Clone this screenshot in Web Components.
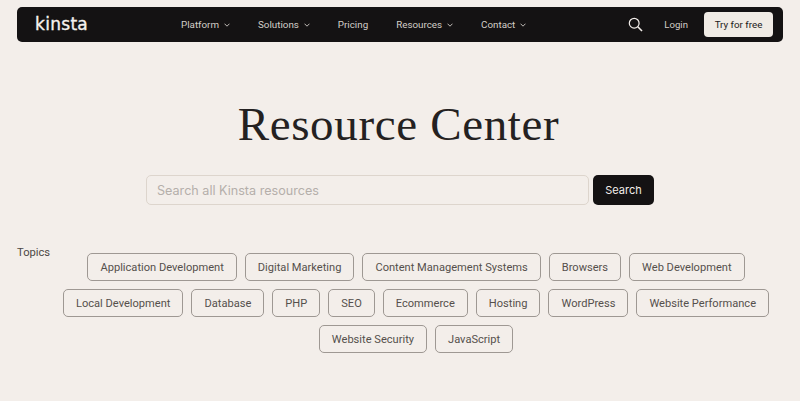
<!DOCTYPE html>
<html lang="en">
<head>
<meta charset="utf-8">
<title>Resource Center</title>
<style>
  html, body { margin: 0; height: 401px; overflow: hidden; }
  body { background: #f3eeea; font-family: Roboto, Inter, sans-serif; }
</style>
</head>
<body>
<kinsta-page>
  <kinsta-nav>
    <nav-item menu>Platform</nav-item>
    <nav-item menu>Solutions</nav-item>
    <nav-item>Pricing</nav-item>
    <nav-item menu>Resources</nav-item>
    <nav-item menu>Contact</nav-item>
  </kinsta-nav>
  <resource-hero heading="Resource Center"></resource-hero>
  <topic-list label="Topics">
    <topic-chip>Application Development</topic-chip>
    <topic-chip>Digital Marketing</topic-chip>
    <topic-chip>Content Management Systems</topic-chip>
    <topic-chip>Browsers</topic-chip>
    <topic-chip>Web Development</topic-chip>
    <topic-chip>Local Development</topic-chip>
    <topic-chip>Database</topic-chip>
    <topic-chip>PHP</topic-chip>
    <topic-chip>SEO</topic-chip>
    <topic-chip>Ecommerce</topic-chip>
    <topic-chip>Hosting</topic-chip>
    <topic-chip>WordPress</topic-chip>
    <topic-chip>Website Performance</topic-chip>
    <topic-chip>Website Security</topic-chip>
    <topic-chip>JavaScript</topic-chip>
  </topic-list>
</kinsta-page>
<script>
// PAGE
class KinstaPage extends HTMLElement {
  constructor() {
    super();
    this.attachShadow({ mode: "open" });
    this.shadowRoot.innerHTML = `
      <style>
        :host { display: block; padding: 7px 17px 0; }
      </style>
      <slot></slot>
    `;
  }
}
customElements.define("kinsta-page", KinstaPage);

// NAVBAR
class KinstaNav extends HTMLElement {
  constructor() {
    super();
    this.attachShadow({ mode: "open" });
    this.shadowRoot.innerHTML = `
      <style>
        :host { display: block; }
        nav {
          display: flex;
          align-items: center;
          height: 35px;
          padding: 0 10px 0 18px;
          background: #141213;
          border-radius: 5px;
          color: #d3cec8;
        }
        .logo {
          width: 51px;
          color: #f6f2ee;
          font: 400 17px/1 "DejaVu Sans", sans-serif;
          letter-spacing: 0.3px;
          -webkit-text-stroke: 0.35px #f6f2ee;
          white-space: nowrap;
        }
        .menu {
          display: flex;
          align-items: center;
          gap: 28px;
          margin-left: 95px;
        }
        .right {
          display: flex;
          align-items: center;
          margin-left: auto;
        }
        .right svg { display: block; }
        .login { margin-left: 21px; font-size: 9.6px; }
        .try {
          margin-left: 16px;
          width: 69px;
          height: 25px;
          display: flex;
          align-items: center;
          justify-content: center;
          background: #f0ebe5;
          color: #1c1a1a;
          border-radius: 4px;
          font-size: 9.8px;
        }
      </style>
      <nav>
        <span class="logo">kinsta</span>
        <div class="menu"><slot></slot></div>
        <div class="right">
          <svg width="15" height="15" viewBox="0 0 15 15" fill="none" stroke="#f3eeea" aria-hidden="true">
            <circle cx="6.2" cy="6.2" r="4.9" stroke-width="1.2"/>
            <path d="M9.8 9.8 14 14" stroke-width="1.6"/>
          </svg>
          <span class="login">Login</span>
          <span class="try">Try for free</span>
        </div>
      </nav>
    `;
  }
}
customElements.define("kinsta-nav", KinstaNav);

class NavItem extends HTMLElement {
  constructor() {
    super();
    this.attachShadow({ mode: "open" });
    const chevron = this.hasAttribute("menu")
      ? `<svg width="6" height="4" viewBox="0 0 6 4" fill="none" stroke="currentColor" stroke-width="0.9"><path d="M.5.7 3 3.2 5.5.7"/></svg>`
      : "";
    this.shadowRoot.innerHTML = `
      <style>
        :host {
          display: flex;
          align-items: center;
          gap: 5px;
          font-size: 9.8px;
          line-height: 14px;
          white-space: nowrap;
        }
      </style>
      <slot></slot>${chevron}
    `;
  }
}
customElements.define("nav-item", NavItem);

// HERO
class ResourceHero extends HTMLElement {
  constructor() {
    super();
    this.attachShadow({ mode: "open" });
    this.shadowRoot.innerHTML = `
      <style>
        :host { display: block; }
        h1 {
          margin: 52px 0 0;
          padding-right: 3px;
          text-align: center;
          font: 400 47px/60px "Liberation Serif", serif;
          letter-spacing: 0.65px;
          color: #242121;
        }
        form {
          display: flex;
          gap: 4px;
          width: 508px;
          margin: 21px auto 0;
        }
        input {
          flex: 1;
          min-width: 0;
          box-sizing: border-box;
          height: 30px;
          padding: 0 10px;
          background: #f3eeea;
          border: 1px solid #ddd5cd;
          border-radius: 5px;
          font: 400 12.6px Inter, sans-serif;
          outline: none;
        }
        input::placeholder { color: #b5afaa; opacity: 1; }
        button {
          width: 61px;
          height: 30px;
          padding: 0;
          background: #141213;
          color: #f3eeea;
          border: 0;
          border-radius: 5px;
          font: 400 11px Inter, sans-serif;
        }
      </style>
      <h1>${this.getAttribute("heading")}</h1>
      <form>
        <input type="text" placeholder="Search all Kinsta resources">
        <button type="button">Search</button>
      </form>
    `;
  }
}
customElements.define("resource-hero", ResourceHero);

// TOPICS
class TopicList extends HTMLElement {
  constructor() {
    super();
    this.attachShadow({ mode: "open" });
    this.shadowRoot.innerHTML = `
      <style>
        :host {
          display: flex;
          align-items: flex-start;
          margin-top: 41px;
        }
        .label {
          width: 32px;
          flex: none;
          font-size: 11.2px;
          line-height: 14px;
          color: #4d4845;
          white-space: nowrap;
        }
        .chips {
          flex: 1;
          display: flex;
          flex-wrap: wrap;
          justify-content: center;
          gap: 8px;
          margin-top: 7px;
        }
      </style>
      <div class="label">${this.getAttribute("label")}</div>
      <div class="chips"><slot></slot></div>
    `;
  }
}
customElements.define("topic-list", TopicList);

class TopicChip extends HTMLElement {
  constructor() {
    super();
    this.attachShadow({ mode: "open" });
    this.shadowRoot.innerHTML = `
      <style>
        :host {
          display: flex;
          align-items: center;
          box-sizing: border-box;
          height: 28px;
          padding: 0 12px;
          border: 1px solid #9e9893;
          border-radius: 5px;
          font-size: 11.1px;
          color: #55504c;
          white-space: nowrap;
        }
      </style>
      <slot></slot>
    `;
  }
}
customElements.define("topic-chip", TopicChip);
</script>
</body>
</html>
